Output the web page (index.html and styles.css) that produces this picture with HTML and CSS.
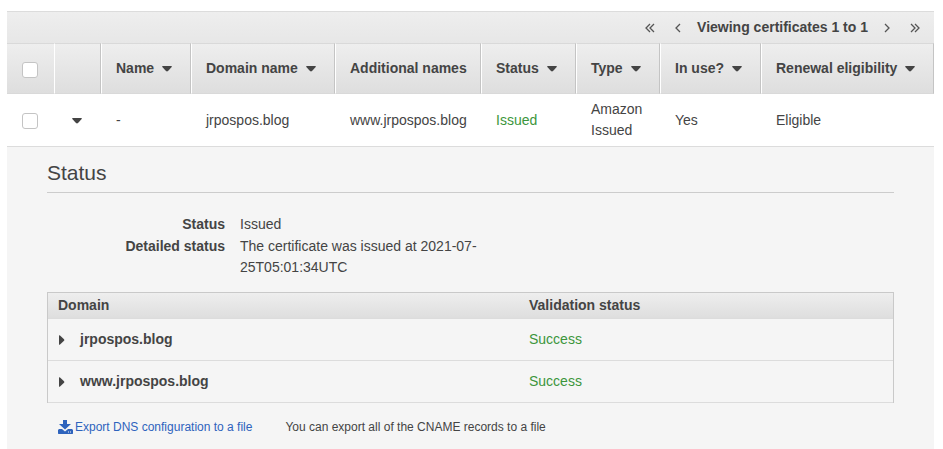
FILE: index.html
```
<!DOCTYPE html>
<html lang="en">
<head>
    <meta charset="UTF-8">
    <meta name="viewport" content="width=device-width, initial-scale=1.0">
    <title>Certificates</title>
    <link rel="stylesheet" href="styles.css">
</head>
<body>
    <!-- shared icons -->
    <svg class="sprite" aria-hidden="true">
        <symbol id="caret" viewBox="0 0 10 6"><path d="M.8 0h8.4q1 .2.5 1L6 5.1q-1 .9-2 0L.3 1Q-.2.2.8 0z"/></symbol>
        <symbol id="arrow" viewBox="0 0 6 10"><path d="M0 .6Q.2-.2 1 .4l4 3.8q.6.8 0 1.6l-4 3.8q-.8.6-1-.2z"/></symbol>
    </svg>

    <main class="certificates">
        <!-- pagination -->
        <nav class="pager" aria-label="Pagination">
            <button type="button" aria-label="First page">
                <svg class="chevron" viewBox="0 0 10 10"><path d="M5 1 1 5l4 4M9 1 5 5l4 4"/></svg>
            </button>
            <button type="button" aria-label="Previous page">
                <svg class="chevron" viewBox="0 0 10 10"><path d="M9 1 5 5l4 4"/></svg>
            </button>
            <strong>Viewing certificates 1 to 1</strong>
            <button type="button" aria-label="Next page">
                <svg class="chevron" viewBox="0 0 10 10"><path d="m1 1 4 4-4 4"/></svg>
            </button>
            <button type="button" aria-label="Last page">
                <svg class="chevron" viewBox="0 0 10 10"><path d="m1 1 4 4-4 4M5 1l4 4-4 4"/></svg>
            </button>
        </nav>

        <table class="cert-table">
            <colgroup>
                <col class="col-check">
                <col class="col-expand">
                <col class="col-name">
                <col class="col-domain">
                <col class="col-additional">
                <col class="col-status">
                <col class="col-type">
                <col class="col-use">
                <col>
            </colgroup>
            <thead>
                <tr>
                    <th class="check"><input type="checkbox" aria-label="Select all certificates"></th>
                    <th></th>
                    <th><button type="button" class="sort">Name <svg class="caret"><use href="#caret"/></svg></button></th>
                    <th><button type="button" class="sort">Domain name <svg class="caret"><use href="#caret"/></svg></button></th>
                    <th>Additional names</th>
                    <th><button type="button" class="sort">Status <svg class="caret"><use href="#caret"/></svg></button></th>
                    <th><button type="button" class="sort">Type <svg class="caret"><use href="#caret"/></svg></button></th>
                    <th><button type="button" class="sort">In use? <svg class="caret"><use href="#caret"/></svg></button></th>
                    <th><button type="button" class="sort">Renewal eligibility <svg class="caret"><use href="#caret"/></svg></button></th>
                </tr>
            </thead>
            <tbody>
                <tr class="cert-row">
                    <td class="check"><input type="checkbox" aria-label="Select jrpospos.blog"></td>
                    <td class="expand">
                        <button type="button" aria-label="Hide details" aria-expanded="true"><svg class="caret"><use href="#caret"/></svg></button>
                    </td>
                    <td>-</td>
                    <td>jrpospos.blog</td>
                    <td>www.jrpospos.blog</td>
                    <td class="ok">Issued</td>
                    <td>Amazon Issued</td>
                    <td>Yes</td>
                    <td>Eligible</td>
                </tr>
                <tr>
                    <td class="details" colspan="9">
                        <h2>Status</h2>
                        <dl>
                            <dt>Status</dt>
                            <dd>Issued</dd>
                            <dt>Detailed status</dt>
                            <dd>The certificate was issued at 2021-07-25T05:01:34UTC</dd>
                        </dl>

                        <table class="domain-table">
                            <thead>
                                <tr>
                                    <th class="domain-col">Domain</th>
                                    <th>Validation status</th>
                                </tr>
                            </thead>
                            <tbody>
                                <tr>
                                    <td><button type="button" class="domain"><svg class="arrow"><use href="#arrow"/></svg>jrpospos.blog</button></td>
                                    <td class="ok">Success</td>
                                </tr>
                                <tr>
                                    <td><button type="button" class="domain"><svg class="arrow"><use href="#arrow"/></svg>www.jrpospos.blog</button></td>
                                    <td class="ok">Success</td>
                                </tr>
                            </tbody>
                        </table>

                        <div class="export">
                            <a href="#">
                                <svg class="download" viewBox="0 0 15 14">
                                    <path d="M5 0h4v4h4L7 9.500 1 4h4z"/>
                                    <path fill-rule="evenodd" d="M1 9h3l3 2.500L10 9h4l1 1v3.500l-.5.5H.5l-.5-.5V10zM10 11.500v1h1v-1zM12 11.500v1h1v-1z"/>
                                </svg>Export DNS configuration to a file</a>
                            <span>You can export all of the CNAME records to a file</span>
                        </div>
                    </td>
                </tr>
            </tbody>
        </table>
    </main>
</body>
</html>
```
FILE: styles.css
```
* { margin: 0; padding: 0; box-sizing: border-box; }
body {
    padding: 11px 9px 0 7px;
    background: #fff;
    color: #444;
    font: 14px/21px "Liberation Sans", Arial, sans-serif;
}
button {
    border: none;
    background: none;
    color: inherit;
    font: inherit;
    cursor: pointer;
}
svg { flex: none; fill: currentColor; }
.sprite { display: none; }
.ok { color: #3c963c; }

/* pagination */
.pager {
    display: flex;
    justify-content: flex-end;
    align-items: center;
    gap: 16px;
    height: 32px;
    padding: 0 14px;
    border-top: 1px solid #dcdcdc;
    background: linear-gradient(#eee, #e7e7e7);
}
.pager button { display: flex; padding-top: 1px; }
.chevron {
    width: 10px;
    height: 10px;
    fill: none;
    stroke: #555;
    stroke-width: 1.3;
}

/* certificate list */
table {
    width: 100%;
    border-collapse: separate;
    border-spacing: 0;
    table-layout: fixed;
}
th { text-align: left; }
.col-check, .col-expand { width: 47px; }
.col-name { width: 90px; }
.col-domain { width: 144px; }
.col-additional { width: 146px; }
.col-status { width: 95px; }
.col-type { width: 84px; }
.col-use { width: 101px; }
.cert-table > thead th {
    height: 51px;
    padding: 0 0 0 14px;
    border: 1px solid #d9d9d9;
    border-left-color: #fff;
    border-right-color: #c4c4c4;
    background: linear-gradient(#eee, #dedede);
    white-space: nowrap;
}
.cert-table > thead th:first-child {
    padding-left: 15px;
    border-left: none;
    border-right: none;
}
.cert-row td {
    height: 53px;
    padding: 0 15px;
    border-bottom: 1px solid #dcdcdc;
}
.cert-row td:nth-child(5) { padding-right: 0; }
.check input {
    display: block;
    width: 16px;
    height: 16px;
    margin-top: 2px;
    appearance: none;
    border: 1px solid #c4c4c4;
    border-radius: 3px;
    background: #fff;
}
.sort, .expand button { display: flex; align-items: center; }
.sort { gap: 8px; font-weight: bold; }
.caret { width: 10px; height: 6px; margin-top: 1px; }
.cert-row .expand { padding-left: 18px; }

/* expanded row */
.details { padding: 0 40px 14px; background: #f5f5f5; }
h2 {
    padding: 14px 0 7px;
    border-bottom: 1px solid #ccc;
    font-size: 21px;
    font-weight: normal;
    line-height: 24px;
}
dl {
    display: grid;
    grid-template-columns: 178px 245px;
    gap: 1px 15px;
    margin: 21px 0 14px;
}
dt { font-weight: bold; text-align: right; }

.domain-table {
    border: 1px solid #c9c9c9;
    border-bottom: none;
}
.domain-table th {
    height: 26px;
    padding: 0 10px;
    border-bottom: 1px solid #dcdcdc;
    background: linear-gradient(#eee, #dedede);
}
.domain-table .domain-col { width: 471px; }
.domain-table td {
    height: 42px;
    padding: 0 10px;
    border-bottom: 1px solid #dcdcdc;
}
.domain {
    display: flex;
    align-items: center;
    gap: 15px;
    padding-left: 1px;
    font-weight: bold;
}
.arrow { width: 6px; height: 10px; }

.export {
    display: flex;
    gap: 33px;
    margin: 16px 11px 0;
    font-size: 12px;
    line-height: 16px;
}
.export a {
    display: flex;
    align-items: center;
    gap: 2px;
    color: #2e63bd;
    text-decoration: none;
}
.download { width: 15px; height: 14px; }
```
